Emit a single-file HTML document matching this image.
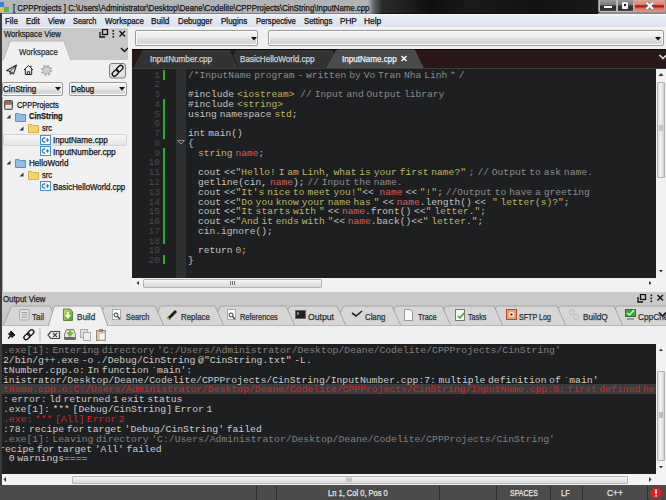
<!DOCTYPE html>
<html><head><meta charset="utf-8"><style>
html,body{margin:0;padding:0;width:666px;height:500px;overflow:hidden;background:#f0f0f0}
.a{position:absolute}
.t{position:absolute;white-space:pre;font-family:"Liberation Sans", sans-serif;transform-origin:0 0;-webkit-text-stroke:0.25px currentColor}
.c{position:absolute;white-space:pre;font-family:"Liberation Mono", monospace}
</style></head><body>
<div class="a" style="left:0px;top:0px;width:666px;height:14px;background:linear-gradient(90deg,#b4b7ba 0px,#b0b3b6 368px,#606264 374px,#2c2c2c 382px,#1c1c1c 410px,#0e0e0e 430px,#1a1a1a 470px,#121212 540px,#1a1a1a 598px,#2a2a2a 666px)"></div>
<div class="a" style="left:0px;top:13px;width:666px;height:1px;background:linear-gradient(90deg,#7c7e80 0px,#7c7e80 370px,#101010 382px,#101010 598px,#8a8a8a 598px)"></div>
<div class="a" style="left:0px;top:2px;width:4px;height:5px;background:#3d7fd6"></div>
<div class="a" style="left:4px;top:7px;width:5px;height:5px;background:#54b84a"></div>
<div class="a" style="left:0px;top:7px;width:4px;height:5px;background:#e8c23c"></div>
<div class="a" style="left:597.5px;top:0px;width:68.5px;height:12.8px;background:#8e8e8e;border-radius:0 0 0 3px"></div>
<div class="a" style="left:598.5px;top:0px;width:18px;height:11.5px;background:linear-gradient(#9a9a9a,#7a7a7a 45%,#3a3a3a 52%,#2e2e2e 80%,#4a4a4a);border:1px solid #b8b8b8;border-top:none;box-sizing:border-box;border-radius:0 0 0 2px"></div>
<div class="a" style="left:604px;top:5.6px;width:7.5px;height:2.4px;background:#f8f8f8;box-shadow:0 0 1px #222"></div>
<div class="a" style="left:617px;top:0px;width:17px;height:11.5px;background:linear-gradient(#9a9a9a,#7a7a7a 45%,#3a3a3a 52%,#2e2e2e 80%,#4a4a4a);border:1px solid #b8b8b8;border-top:none;box-sizing:border-box"></div>
<div class="a" style="left:621.5px;top:2px;width:6.5px;height:6.5px;background:#f4f4f4;border-radius:1px;box-shadow:0 0 1px #222"></div>
<div class="a" style="left:623.7px;top:4.2px;width:2.2px;height:2.2px;background:#111"></div>
<div class="a" style="left:634px;top:0px;width:30.5px;height:11.5px;background:linear-gradient(#e4a090,#d88a7a 40%,#c42a20 48%,#b81818 62%,#d87060 75%,#e09080);border:1px solid #c8a090;border-top:none;box-sizing:border-box;border-radius:0 0 2px 0"></div>
<svg class="a" style="left:644px;top:1px" width="12" height="10"><path d="M2.5 1.5 L9 8 M9 1.5 L2.5 8" stroke="#5a7aa0" stroke-width="3.2"/><path d="M2.5 1.5 L9 8 M9 1.5 L2.5 8" stroke="#fff" stroke-width="2"/></svg>
<div class="a" style="left:0px;top:14px;width:666px;height:14px;background:linear-gradient(#fafbfd 0px,#e6ebf4 2px,#dfe5f0 10px,#dce3ee 12.5px,#f4f6f8 13px)"></div>
<div class="a" style="left:0px;top:28px;width:128px;height:32px;background:#c9c9c9"></div>
<div class="a" style="left:0px;top:60px;width:128px;height:232px;background:#f0f0f0"></div>
<svg class="a" style="left:99px;top:29px" width="28" height="10"><rect x="3.5" y="0.5" width="5" height="5" fill="none" stroke="#111" stroke-width="1.3"/><path d="M1 3 V8 H6" fill="none" stroke="#111" stroke-width="1.3"/><rect x="13.5" y="1" width="1.6" height="1.6" fill="#111"/><rect x="13.5" y="4" width="1.6" height="1.6" fill="#111"/><rect x="13.5" y="7" width="1.6" height="1.6" fill="#111"/><path d="M20.5 2 L26 7.5 M26 2 L20.5 7.5" stroke="#111" stroke-width="1.3"/></svg>
<svg class="a" style="left:0px;top:40px" width="128" height="21"><path d="M3 20.5 L10 1.5 Q11 1 12 1 L64 1 L71 20.5 Z" fill="#f0f0f0" stroke="#b8b8b8" stroke-width="1"/><rect x="3" y="20" width="68" height="1.5" fill="#f0f0f0"/><path d="M121 8 L124.5 11.5 L128 8" fill="none" stroke="#111" stroke-width="1.5"/></svg>
<svg class="a" style="left:0px;top:60px" width="128" height="20"><path d="M6.5 10.5 L16.5 5 L13.5 14 L10 11.5 Z" fill="#e0e0e0" stroke="#333" stroke-width="1.1" stroke-linejoin="round"/><path d="M10 11.5 L16.5 5 M10 11.5 V14.5 L11.8 13" fill="none" stroke="#333" stroke-width="1" stroke-linejoin="round"/><path d="M24 10 L28.5 5.5 L33 10 M25.3 9 V14.5 H31.7 V9 M27.3 14.5 V11.8 H29.7 V14.5 M31 7.5 V5.5" fill="none" stroke="#222" stroke-width="1"/><circle cx="46.5" cy="10.3" r="4.8" fill="none" stroke="#aaaaaa" stroke-width="1.8" stroke-dasharray="1.9 1.87"/><circle cx="46.5" cy="10.3" r="3.4" fill="#dcdcdc" stroke="#aaaaaa" stroke-width="1.1"/><circle cx="46.5" cy="10.3" r="1.3" fill="#f4f4f4" stroke="#b0b0b0" stroke-width="0.8"/><rect x="109.5" y="3.5" width="16" height="14.5" rx="2.5" fill="#e4e4e4" stroke="#7a7a7a" stroke-width="1"/><g transform="rotate(-45 117.5 10.7)"><rect x="110.8" y="8.6" width="7.2" height="4.4" rx="2.2" fill="none" stroke="#111" stroke-width="1.3"/><rect x="117" y="8.6" width="7.2" height="4.4" rx="2.2" fill="none" stroke="#111" stroke-width="1.3"/></g></svg>
<div class="a" style="left:2px;top:81.5px;width:61px;height:14.6px;background:linear-gradient(#f4f4f4,#ebebeb 45%,#dddddd 55%,#d2d2d2);border:1px solid #9a9a9a;border-radius:2px;box-shadow:inset 0 0 0 1px #fafafa;box-sizing:border-box"></div>
<svg class="a" style="left:55px;top:87.3px" width="6" height="4"><path d="M0 0 H6 L3 3.5 Z" fill="#111"/></svg>
<div class="a" style="left:69px;top:81.5px;width:58px;height:14.6px;background:linear-gradient(#f4f4f4,#ebebeb 45%,#dddddd 55%,#d2d2d2);border:1px solid #9a9a9a;border-radius:2px;box-shadow:inset 0 0 0 1px #fafafa;box-sizing:border-box"></div>
<svg class="a" style="left:119px;top:87.3px" width="6" height="4"><path d="M0 0 H6 L3 3.5 Z" fill="#111"/></svg>
<div class="a" style="left:3px;top:133.5px;width:124px;height:12px;background:linear-gradient(#f6f6f6,#e4e4e4);border:1px solid #d4d4d4;border-radius:2px;box-sizing:border-box"></div>
<svg class="a" style="left:4px;top:100px" width="9" height="10"><rect x="0.5" y="0.5" width="8" height="9" rx="1" fill="#8a8a8a" stroke="#555" stroke-width="1"/><rect x="1" y="1" width="7" height="3" fill="#d8552a"/><rect x="1.5" y="5" width="6" height="3.5" fill="#e8e8e8"/></svg>
<svg class="a" style="left:6px;top:114px" width="5" height="5"><path d="M4.5 0.5 V4.5 H0.5 Z" fill="#333"/></svg>
<svg class="a" style="left:15px;top:112px" width="11" height="10"><path d="M0.5 1.5 H4 L5 2.5 H10.5 V9.5 H0.5 Z" fill="#8fbde8" stroke="#5a8fc8" stroke-width="1"/></svg>
<svg class="a" style="left:19px;top:126px" width="5" height="5"><path d="M4.5 0.5 V4.5 H0.5 Z" fill="#333"/></svg>
<svg class="a" style="left:28px;top:123px" width="11" height="10"><path d="M0.5 1.5 H4 L5 2.5 H10.5 V9.5 H0.5 Z" fill="#f4d36a" stroke="#d8b040" stroke-width="1"/></svg>
<svg class="a" style="left:40px;top:134.5px" width="11" height="10"><rect x="0.5" y="0.5" width="10" height="9" fill="#f8fbff" stroke="#4a90d0" stroke-width="1"/><path d="M5.2 3.2 A2 2 0 1 0 5.2 6.8" fill="none" stroke="#2a78c8" stroke-width="1.3"/><path d="M5.8 5 H9.2 M7.5 3.3 V6.7" stroke="#2a78c8" stroke-width="1.2"/></svg>
<svg class="a" style="left:40px;top:146px" width="11" height="10"><rect x="0.5" y="0.5" width="10" height="9" fill="#f8fbff" stroke="#4a90d0" stroke-width="1"/><path d="M5.2 3.2 A2 2 0 1 0 5.2 6.8" fill="none" stroke="#2a78c8" stroke-width="1.3"/><path d="M5.8 5 H9.2 M7.5 3.3 V6.7" stroke="#2a78c8" stroke-width="1.2"/></svg>
<svg class="a" style="left:6px;top:160px" width="5" height="5"><path d="M4.5 0.5 V4.5 H0.5 Z" fill="#333"/></svg>
<svg class="a" style="left:15px;top:158px" width="11" height="10"><path d="M0.5 1.5 H4 L5 2.5 H10.5 V9.5 H0.5 Z" fill="#8fbde8" stroke="#5a8fc8" stroke-width="1"/></svg>
<svg class="a" style="left:19px;top:172px" width="5" height="5"><path d="M4.5 0.5 V4.5 H0.5 Z" fill="#333"/></svg>
<svg class="a" style="left:28px;top:169.5px" width="11" height="10"><path d="M0.5 1.5 H4 L5 2.5 H10.5 V9.5 H0.5 Z" fill="#f4d36a" stroke="#d8b040" stroke-width="1"/></svg>
<svg class="a" style="left:40px;top:181px" width="11" height="10"><rect x="0.5" y="0.5" width="10" height="9" fill="#f8fbff" stroke="#4a90d0" stroke-width="1"/><path d="M5.2 3.2 A2 2 0 1 0 5.2 6.8" fill="none" stroke="#2a78c8" stroke-width="1.3"/><path d="M5.8 5 H9.2 M7.5 3.3 V6.7" stroke="#2a78c8" stroke-width="1.2"/></svg>
<div class="a" style="left:128px;top:28px;width:538px;height:21px;background:#f0f0f0"></div>
<div class="a" style="left:135px;top:30px;width:123px;height:16px;background:linear-gradient(#f4f4f4,#ebebeb 45%,#dddddd 55%,#d2d2d2);border:1px solid #9a9a9a;border-radius:2px;box-shadow:inset 0 0 0 1px #fafafa;box-sizing:border-box"></div>
<svg class="a" style="left:250.5px;top:36.5px" width="6" height="4"><path d="M0 0 H6 L3 3.5 Z" fill="#111"/></svg>
<div class="a" style="left:268px;top:30px;width:395.5px;height:16px;background:linear-gradient(#f4f4f4,#ebebeb 45%,#dddddd 55%,#d2d2d2);border:1px solid #9a9a9a;border-radius:2px;box-shadow:inset 0 0 0 1px #fafafa;box-sizing:border-box"></div>
<svg class="a" style="left:655px;top:36.5px" width="6" height="4"><path d="M0 0 H6 L3 3.5 Z" fill="#111"/></svg>
<div class="a" style="left:132px;top:49px;width:534px;height:20px;background:#2a1818"></div>
<svg class="a" style="left:132px;top:49px" width="534" height="20"><rect x="0" y="0" width="534" height="1" fill="#080808"/><path d="M95 19 L104 1 L200 1 L209 19 Z" fill="#333333"/><path d="M1.5 19 L10.5 1 L98 1 L106.5 19 Z" fill="#333333"/><path d="M98 1 L106.5 19" stroke="#1e1e1e" stroke-width="1"/><path d="M195 19 L205 1 L282.5 1 L291 19 Z" fill="#4a4a4a" stroke="#5a5a5a" stroke-width="0.8"/><path d="M527.5 6 L531 9.5 L534.5 6" fill="none" stroke="#e8e8e8" stroke-width="1.5"/><path d="M269.5 7 L274.5 12 M274.5 7 L269.5 12" stroke="#f4f4f4" stroke-width="1.5"/><rect x="0" y="19" width="534" height="1" fill="#3c3c3c"/></svg>
<div class="a" style="left:132px;top:69px;width:524px;height:209px;background:#1e1f21"></div>
<div class="a" style="left:131px;top:69px;width:1px;height:209px;background:#101010"></div>
<div class="a" style="left:176px;top:69px;width:10px;height:209px;background:#2e2f31"></div>
<div class="a" style="left:163px;top:70px;width:2px;height:9.5px;background:#22b022"></div>
<div class="a" style="left:163px;top:99px;width:2px;height:39.5px;background:#22b022"></div>
<div class="a" style="left:163px;top:148px;width:2px;height:96px;background:#22b022"></div>
<div class="a" style="left:163px;top:254.5px;width:2px;height:9.5px;background:#22b022"></div>
<div class="c" style="left:154.24px;top:70.63px;font-size:9.6px;line-height:9.6px;word-spacing:-2.86px"><span style="color:#4a4a4a">1</span></div>
<div class="c" style="left:154.24px;top:80.39px;font-size:9.6px;line-height:9.6px;word-spacing:-2.86px"><span style="color:#4a4a4a">2</span></div>
<div class="c" style="left:154.24px;top:90.15px;font-size:9.6px;line-height:9.6px;word-spacing:-2.86px"><span style="color:#4a4a4a">3</span></div>
<div class="c" style="left:154.24px;top:99.91px;font-size:9.6px;line-height:9.6px;word-spacing:-2.86px"><span style="color:#4a4a4a">4</span></div>
<div class="c" style="left:154.24px;top:109.67px;font-size:9.6px;line-height:9.6px;word-spacing:-2.86px"><span style="color:#4a4a4a">5</span></div>
<div class="c" style="left:154.24px;top:119.43px;font-size:9.6px;line-height:9.6px;word-spacing:-2.86px"><span style="color:#4a4a4a">6</span></div>
<div class="c" style="left:154.24px;top:129.19px;font-size:9.6px;line-height:9.6px;word-spacing:-2.86px"><span style="color:#4a4a4a">7</span></div>
<div class="c" style="left:154.24px;top:138.95px;font-size:9.6px;line-height:9.6px;word-spacing:-2.86px"><span style="color:#4a4a4a">8</span></div>
<div class="c" style="left:154.24px;top:148.71px;font-size:9.6px;line-height:9.6px;word-spacing:-2.86px"><span style="color:#4a4a4a">9</span></div>
<div class="c" style="left:148.48px;top:158.47px;font-size:9.6px;line-height:9.6px;word-spacing:-2.86px"><span style="color:#4a4a4a">10</span></div>
<div class="c" style="left:148.48px;top:168.23px;font-size:9.6px;line-height:9.6px;word-spacing:-2.86px"><span style="color:#4a4a4a">11</span></div>
<div class="c" style="left:148.48px;top:177.99px;font-size:9.6px;line-height:9.6px;word-spacing:-2.86px"><span style="color:#4a4a4a">12</span></div>
<div class="c" style="left:148.48px;top:187.75px;font-size:9.6px;line-height:9.6px;word-spacing:-2.86px"><span style="color:#4a4a4a">13</span></div>
<div class="c" style="left:148.48px;top:197.51px;font-size:9.6px;line-height:9.6px;word-spacing:-2.86px"><span style="color:#4a4a4a">14</span></div>
<div class="c" style="left:148.48px;top:207.27px;font-size:9.6px;line-height:9.6px;word-spacing:-2.86px"><span style="color:#4a4a4a">15</span></div>
<div class="c" style="left:148.48px;top:217.03px;font-size:9.6px;line-height:9.6px;word-spacing:-2.86px"><span style="color:#4a4a4a">16</span></div>
<div class="c" style="left:148.48px;top:226.79px;font-size:9.6px;line-height:9.6px;word-spacing:-2.86px"><span style="color:#4a4a4a">17</span></div>
<div class="c" style="left:148.48px;top:236.55px;font-size:9.6px;line-height:9.6px;word-spacing:-2.86px"><span style="color:#4a4a4a">18</span></div>
<div class="c" style="left:148.48px;top:246.31px;font-size:9.6px;line-height:9.6px;word-spacing:-2.86px"><span style="color:#4a4a4a">19</span></div>
<div class="c" style="left:148.48px;top:256.07px;font-size:9.6px;line-height:9.6px;word-spacing:-2.86px"><span style="color:#4a4a4a">20</span></div>
<svg class="a" style="left:177px;top:140.12px" width="8" height="5"><path d="M0.5 0.5 H7.5 L4 4 Z" fill="none" stroke="#8a8a8a" stroke-width="1"/></svg>
<div class="c" style="left:188.00px;top:70.63px;font-size:9.6px;line-height:9.6px;word-spacing:-2.86px"><span style="color:#8c8c8c">/*InputName program - written by Vo Tran Nha Linh * /</span></div>
<div class="c" style="left:188.00px;top:90.15px;font-size:9.6px;line-height:9.6px;word-spacing:-2.86px"><span style="color:#c4c4c4">#include </span><span style="color:#b8b866">&lt;iostream&gt;</span><span style="color:#8c8c8c">  // Input and Output library</span></div>
<div class="c" style="left:188.00px;top:99.91px;font-size:9.6px;line-height:9.6px;word-spacing:-2.86px"><span style="color:#c4c4c4">#include </span><span style="color:#b8b866">&lt;string&gt;</span></div>
<div class="c" style="left:188.00px;top:109.67px;font-size:9.6px;line-height:9.6px;word-spacing:-2.86px"><span style="color:#c4c4c4">using namespace </span><span style="color:#ccb068">std</span><span style="color:#c4c4c4">;</span></div>
<div class="c" style="left:188.00px;top:129.19px;font-size:9.6px;line-height:9.6px;word-spacing:-2.86px"><span style="color:#c4c4c4">int main()</span></div>
<div class="c" style="left:188.00px;top:138.95px;font-size:9.6px;line-height:9.6px;word-spacing:-2.86px"><span style="color:#c4c4c4">{</span></div>
<div class="c" style="left:198.00px;top:148.71px;font-size:9.6px;line-height:9.6px;word-spacing:-2.86px"><span style="color:#ccb068">string </span><span style="color:#d06060">name</span><span style="color:#c4c4c4">;</span></div>
<div class="c" style="left:198.00px;top:168.23px;font-size:9.6px;line-height:9.6px;word-spacing:-2.86px"><span style="color:#c4c4c4">cout &lt;&lt;</span><span style="color:#b8b866">&quot;Hello! I am Linh, what is your first name?&quot;</span><span style="color:#8c8c8c"> ; // Output to ask name.</span></div>
<div class="c" style="left:198.00px;top:177.99px;font-size:9.6px;line-height:9.6px;word-spacing:-2.86px"><span style="color:#c4c4c4">getline(cin, </span><span style="color:#d06060">name</span><span style="color:#c4c4c4">); </span><span style="color:#8c8c8c">// Input the name.</span></div>
<div class="c" style="left:198.00px;top:187.75px;font-size:9.6px;line-height:9.6px;word-spacing:-2.86px"><span style="color:#c4c4c4">cout &lt;&lt;</span><span style="color:#b8b866">&quot;It&#x27;s nice to meet you!&quot;</span><span style="color:#c4c4c4">&lt;&lt;  </span><span style="color:#d06060">name</span><span style="color:#c4c4c4"> &lt;&lt; </span><span style="color:#b8b866">&quot;!&quot;</span><span style="color:#c4c4c4">; </span><span style="color:#8c8c8c">//Output to have a greeting</span></div>
<div class="c" style="left:198.00px;top:197.51px;font-size:9.6px;line-height:9.6px;word-spacing:-2.86px"><span style="color:#c4c4c4">cout &lt;&lt;</span><span style="color:#b8b866">&quot;Do you know your name has &quot;</span><span style="color:#c4c4c4"> &lt;&lt; </span><span style="color:#d06060">name</span><span style="color:#c4c4c4">.length() &lt;&lt;  </span><span style="color:#b8b866">&quot; letter(s)?&quot;</span><span style="color:#c4c4c4">;</span></div>
<div class="c" style="left:198.00px;top:207.27px;font-size:9.6px;line-height:9.6px;word-spacing:-2.86px"><span style="color:#c4c4c4">cout &lt;&lt;</span><span style="color:#b8b866">&quot;It starts with &quot;</span><span style="color:#c4c4c4"> &lt;&lt; </span><span style="color:#d06060">name</span><span style="color:#c4c4c4">.front() &lt;&lt;</span><span style="color:#b8b866">&quot; letter.&quot;</span><span style="color:#c4c4c4">;</span></div>
<div class="c" style="left:198.00px;top:217.03px;font-size:9.6px;line-height:9.6px;word-spacing:-2.86px"><span style="color:#c4c4c4">cout &lt;&lt;</span><span style="color:#b8b866">&quot;And it ends with &quot;</span><span style="color:#c4c4c4">&lt;&lt; </span><span style="color:#d06060">name</span><span style="color:#c4c4c4">.back()&lt;&lt;</span><span style="color:#b8b866">&quot; letter.&quot;</span><span style="color:#c4c4c4">;</span></div>
<div class="c" style="left:198.00px;top:226.79px;font-size:9.6px;line-height:9.6px;word-spacing:-2.86px"><span style="color:#c4c4c4">cin.ignore();</span></div>
<div class="c" style="left:198.00px;top:246.31px;font-size:9.6px;line-height:9.6px;word-spacing:-2.86px"><span style="color:#c4c4c4">return </span><span style="color:#ccb068">0</span><span style="color:#c4c4c4">;</span></div>
<div class="c" style="left:188.00px;top:256.07px;font-size:9.6px;line-height:9.6px;word-spacing:-2.86px"><span style="color:#c4c4c4">}</span></div>
<div class="a" style="left:656px;top:69px;width:10px;height:209px;background:#f2f2f2"></div>
<div class="a" style="left:657px;top:82px;width:8px;height:96px;background:linear-gradient(90deg,#dcdcdc,#f4f4f4 40%,#d0d0d0);border:1px solid #b0b0b0;border-radius:1px;box-sizing:border-box"></div>
<svg class="a" style="left:656px;top:68px" width="10" height="210"><path d="M2.5 8 L5 5 L7.5 8 Z" fill="#333"/><path d="M3 202 L5 204.5 L7 202 Z" fill="#333"/><path d="M3 58 H7 M3 60 H7 M3 62 H7" stroke="#888" stroke-width="0.8"/></svg>
<div class="a" style="left:132px;top:278px;width:534px;height:10px;background:#f2f2f2"></div>
<svg class="a" style="left:132px;top:278px" width="534" height="10"><path d="M7 3 L4.5 5 L7 7 Z" fill="#333"/><path d="M517 3 L519.5 5 L517 7 Z" fill="#333"/></svg>
<div class="a" style="left:143px;top:278.5px;width:179px;height:9px;background:linear-gradient(#f4f4f4,#dadada);border:1px solid #b4b4b4;border-radius:1px;box-sizing:border-box"></div>
<svg class="a" style="left:229px;top:280px" width="8" height="6"><path d="M1.5 1 V5 M3.5 1 V5 M5.5 1 V5" stroke="#666" stroke-width="0.9"/></svg>
<div class="a" style="left:128px;top:288px;width:538px;height:4px;background:#f0f0f0"></div>
<div class="a" style="left:128px;top:49px;width:4px;height:243px;background:#f0f0f0"></div>
<div class="a" style="left:0px;top:292px;width:666px;height:33px;background:#c9c9c9"></div>
<svg class="a" style="left:637px;top:294px" width="29" height="9"><rect x="3.5" y="0.5" width="5" height="5" fill="none" stroke="#111" stroke-width="1.3"/><path d="M1 3 V8 H6" fill="none" stroke="#111" stroke-width="1.3"/><rect x="13.5" y="0.5" width="1.6" height="1.6" fill="#111"/><rect x="13.5" y="3.5" width="1.6" height="1.6" fill="#111"/><rect x="13.5" y="6.5" width="1.6" height="1.6" fill="#111"/><path d="M20.5 1 L26 6.5 M26 1 L20.5 6.5" stroke="#111" stroke-width="1.3"/></svg>
<svg class="a" style="left:0px;top:304.8px" width="666" height="22"><path d="M608 21 L616 2 Q617 1 619 1 L700 1 L709 21 Z" fill="#d6d6d6" stroke="#a4a4a4" stroke-width="1"/><path d="M551 21 L559 2 Q560 1 562 1 L614 1 L623 21 Z" fill="#d6d6d6" stroke="#a4a4a4" stroke-width="1"/><path d="M488 21 L496 2 Q497 1 499 1 L557 1 L566 21 Z" fill="#d6d6d6" stroke="#a4a4a4" stroke-width="1"/><path d="M437 21 L445 2 Q446 1 448 1 L494 1 L503 21 Z" fill="#d6d6d6" stroke="#a4a4a4" stroke-width="1"/><path d="M387 21 L395 2 Q396 1 398 1 L442 1 L451 21 Z" fill="#d6d6d6" stroke="#a4a4a4" stroke-width="1"/><path d="M335 21 L343 2 Q344 1 346 1 L392 1 L401 21 Z" fill="#d6d6d6" stroke="#a4a4a4" stroke-width="1"/><path d="M281 21 L289 2 Q290 1 292 1 L337 1 L346 21 Z" fill="#d6d6d6" stroke="#a4a4a4" stroke-width="1"/><path d="M212 21 L220 2 Q221 1 223 1 L286 1 L295 21 Z" fill="#d6d6d6" stroke="#a4a4a4" stroke-width="1"/><path d="M152 21 L160 2 Q161 1 163 1 L215 1 L224 21 Z" fill="#d6d6d6" stroke="#a4a4a4" stroke-width="1"/><path d="M96 21 L104 2 Q105 1 107 1 L155 1 L164 21 Z" fill="#d6d6d6" stroke="#a4a4a4" stroke-width="1"/><path d="M3 21 L11 2 Q12 1 14 1 L50 1 L59 21 Z" fill="#d6d6d6" stroke="#a4a4a4" stroke-width="1"/><rect x="0" y="20.5" width="666" height="1" fill="#b4b4b4"/><path d="M48 22 L54 2 Q55 1 57 1 L101 1 L108 22" fill="#f0f0f0" stroke="#a4a4a4" stroke-width="1"/><path d="M659 7.5 L662.5 11 L666 7.5" fill="none" stroke="#111" stroke-width="1.6"/></svg>
<svg class="a" style="left:0px;top:308px" width="666" height="14"><rect x="19.5" y="1.5" width="9.5" height="10.5" rx="1.5" fill="#e2e2e2" stroke="#a8a8a8"/><path d="M21.5 4.5 H27 M21.5 6.8 H27 M21.5 9.1 H27" stroke="#9a9a9a" stroke-width="1"/><defs><linearGradient id="gb" x1="0" y1="0" x2="1" y2="1"><stop offset="0" stop-color="#d8e070"/><stop offset="1" stop-color="#4a9a2a"/></linearGradient></defs><path d="M63.5 1 H70 L72.5 3.5 V12.5 H63.5 Z" fill="url(#gb)" stroke="#5a8a2a"/><path d="M68 4 V9 M65.8 7 L68 9.5 L70.2 7" stroke="#fff" stroke-width="1.6" fill="none"/><rect x="112.5" y="1.5" width="8" height="10" fill="#fff" stroke="#aaa"/><circle cx="116" cy="7" r="2" fill="none" stroke="#333"/><path d="M117.5 8.5 L120 11" stroke="#333" stroke-width="1.3"/><path d="M168 11 L176 3" stroke="#222" stroke-width="3"/><path d="M167 12 L169 10" stroke="#e8c040" stroke-width="2"/><rect x="227.5" y="1.5" width="8" height="10" fill="#fff" stroke="#aaa"/><circle cx="231" cy="7" r="2" fill="none" stroke="#333"/><path d="M232.5 8.5 L235 11" stroke="#333" stroke-width="1.3"/><rect x="295.5" y="2.5" width="10" height="8" fill="#222" stroke="#666"/><path d="M297 4.5 L299 5.5 L297 6.5" stroke="#ddd" fill="none" stroke-width="0.8"/><path d="M352 5 L356 8 L362 3" stroke="#222" stroke-width="1.6" fill="none"/><path d="M404.5 1.5 H410 L412.5 4 V12.5 H404.5 Z" fill="#fafafa" stroke="#999"/><rect x="455.5" y="1.5" width="9" height="11" fill="#f4f4f4" stroke="#777"/><path d="M458 8 L460 10 L464 5" stroke="#3a3" stroke-width="1.5" fill="none"/><rect x="506.5" y="1.5" width="10" height="10" fill="#f0a070" stroke="#c04a20"/><circle cx="511.5" cy="6.5" r="2.5" fill="#fff"/><circle cx="511.5" cy="6.5" r="1.2" fill="#333"/><circle cx="572" cy="4" r="2.5" fill="none" stroke="#bbb"/><circle cx="576" cy="9" r="2.5" fill="none" stroke="#bbb"/><rect x="625.5" y="1.5" width="10" height="7" fill="#3a3" stroke="#2a7a2a"/><path d="M627 5 L629.5 7 L634 2" stroke="#fff" stroke-width="1.2" fill="none"/><rect x="627" y="10" width="7" height="2" fill="#999"/></svg>
<div class="a" style="left:0px;top:326px;width:666px;height:18px;background:#f0f0f0"></div>
<svg class="a" style="left:0px;top:326px" width="60" height="18"><path d="M8 12.5 L10.5 10" stroke="#111" stroke-width="1.3"/><path d="M9.5 7 L13 10.5 L12 11.5 L8.5 8 Z M11 5 L15 9 L13.5 10 L10 6.5 Z" fill="#111" stroke="#111" stroke-width="1"/><g transform="rotate(-45 28.8 8.8)"><rect x="22.8" y="6.6" width="7" height="4.4" rx="2.2" fill="none" stroke="#111" stroke-width="1.3"/><rect x="28" y="6.6" width="7" height="4.4" rx="2.2" fill="none" stroke="#111" stroke-width="1.3"/></g><rect x="39.5" y="2" width="1" height="14" fill="#b8b8b8"/></svg>
<svg class="a" style="left:44px;top:327px" width="70" height="16"><path d="M4 8 L7 4.5 H15.5 V11.5 H7 Z" fill="none" stroke="#444" stroke-width="1.2"/><path d="M9 6 L13 10 M13 6 L9 10" stroke="#444" stroke-width="1.2"/><path d="M20.5 7.5 L22.5 2.5 H29.5 L31.5 7.5 V12.5 H20.5 Z" fill="#e4e4e4" stroke="#777"/><rect x="21" y="10" width="10" height="2.5" fill="#666"/><path d="M26 2 V7.5 M23.5 5.5 L26 8.5 L28.5 5.5" stroke="#7ab83a" stroke-width="2.2" fill="none"/><rect x="36.5" y="2.5" width="7" height="8" fill="#ddd" stroke="#aaa"/><rect x="39.5" y="5.5" width="7" height="8" fill="#eee" stroke="#aaa"/><rect x="52.5" y="3.5" width="9" height="10" fill="#d8c8a8" stroke="#a08860"/><rect x="55" y="6" width="6" height="7" fill="#f4f4f4" stroke="#bbb"/><rect x="55" y="2" width="4" height="3" fill="#888"/></svg>
<div class="a" style="left:0px;top:344px;width:666px;height:130px;background:#1e1f21"></div>
<div class="a" style="left:0px;top:383.5px;width:656px;height:10px;background:#3a3b3d"></div>
<div class="c" style="left:3.00px;top:345.95px;font-size:9.767px;line-height:9.767px;word-spacing:-3.25px"><span style="color:#808080">.exe[1]: Entering directory &#x27;C:/Users/Administrator/Desktop/Deane/Codelite/CPPProjects/CinString&#x27;</span></div>
<div class="c" style="left:3.00px;top:355.81px;font-size:9.767px;line-height:9.767px;word-spacing:-3.25px"><span style="color:#cccccc">2/bin/g++.exe -o ./Debug/CinString @&quot;CinString.txt&quot; -L.</span></div>
<div class="c" style="left:3.00px;top:365.67px;font-size:9.767px;line-height:9.767px;word-spacing:-3.25px"><span style="color:#cccccc">tNumber.cpp.o: In function `main&#x27;:</span></div>
<div class="c" style="left:3.00px;top:375.53px;font-size:9.767px;line-height:9.767px;word-spacing:-3.25px"><span style="color:#cccccc">inistrator/Desktop/Deane/Codelite/CPPProjects/CinString/InputNumber.cpp:7: multiple definition of `main&#x27;</span></div>
<div class="c" style="left:3.00px;top:385.39px;font-size:9.767px;line-height:9.767px;word-spacing:-3.25px"><span style="color:#e01c1c">tName.cpp.o:C:/Users/Administrator/Desktop/Deane/Codelite/CPPProjects/CinString/InputName.cpp:8: first defined here</span></div>
<div class="c" style="left:3.00px;top:395.25px;font-size:9.767px;line-height:9.767px;word-spacing:-3.25px"><span style="color:#cccccc">: error: ld returned 1 exit status</span></div>
<div class="c" style="left:3.00px;top:405.11px;font-size:9.767px;line-height:9.767px;word-spacing:-3.25px"><span style="color:#cccccc">.exe[1]: *** [Debug/CinString] Error 1</span></div>
<div class="c" style="left:3.00px;top:414.97px;font-size:9.767px;line-height:9.767px;word-spacing:-3.25px"><span style="color:#e01c1c">.exe: *** [All] Error 2</span></div>
<div class="c" style="left:3.00px;top:424.83px;font-size:9.767px;line-height:9.767px;word-spacing:-3.25px"><span style="color:#cccccc">:78: recipe for target &#x27;Debug/CinString&#x27; failed</span></div>
<div class="c" style="left:3.00px;top:434.69px;font-size:9.767px;line-height:9.767px;word-spacing:-3.25px"><span style="color:#808080">.exe[1]: Leaving directory &#x27;C:/Users/Administrator/Desktop/Deane/Codelite/CPPProjects/CinString&#x27;</span></div>
<div class="c" style="left:-0.90px;top:444.55px;font-size:9.767px;line-height:9.767px;word-spacing:-3.25px"><span style="color:#cccccc">recipe for target &#x27;All&#x27; failed</span></div>
<div class="c" style="left:8.76px;top:454.41px;font-size:9.767px;line-height:9.767px;word-spacing:-3.25px"><span style="color:#cccccc">0 warnings====</span></div>
<div class="a" style="left:656px;top:344px;width:10px;height:130px;background:#f2f2f2"></div>
<div class="a" style="left:657px;top:370.5px;width:8px;height:90px;background:linear-gradient(90deg,#dcdcdc,#f4f4f4 40%,#d0d0d0);border:1px solid #b0b0b0;border-radius:1px;box-sizing:border-box"></div>
<svg class="a" style="left:656px;top:344px" width="10" height="130"><path d="M3 7 L5 4.5 L7 7 Z" fill="#333"/><path d="M3 122 L5 124.5 L7 122 Z" fill="#333"/><path d="M3 69 H7 M3 71 H7 M3 73 H7" stroke="#777" stroke-width="0.8"/></svg>
<div class="a" style="left:0px;top:474px;width:666px;height:11px;background:#f4f4f4"></div>
<div class="a" style="left:72px;top:475.5px;width:556px;height:8.5px;background:linear-gradient(#f4f4f4,#dadada);border:1px solid #b4b4b4;border-radius:1px;box-sizing:border-box"></div>
<svg class="a" style="left:0px;top:474px" width="666" height="11"><path d="M6 3 L3.5 5.5 L6 8 Z" fill="#333"/><path d="M649 3 L651.5 5.5 L649 8 Z" fill="#333"/><path d="M347 3.5 V7.5 M349 3.5 V7.5 M351 3.5 V7.5" stroke="#888" stroke-width="0.8"/></svg>
<div class="a" style="left:0px;top:485px;width:666px;height:15px;background:#4b4b4b"></div>
<div class="a" style="left:256px;top:486px;width:1px;height:14px;background:#2e2e2e"></div>
<div class="a" style="left:276px;top:486px;width:1px;height:14px;background:#2e2e2e"></div>
<div class="a" style="left:439px;top:486px;width:1px;height:14px;background:#2e2e2e"></div>
<div class="a" style="left:496px;top:486px;width:1px;height:14px;background:#2e2e2e"></div>
<div class="a" style="left:550px;top:486px;width:1px;height:14px;background:#2e2e2e"></div>
<div class="a" style="left:582px;top:486px;width:1px;height:14px;background:#2e2e2e"></div>
<div class="a" style="left:647px;top:486px;width:1px;height:14px;background:#2e2e2e"></div>
<svg class="a" style="left:650px;top:487px" width="12" height="12"><circle cx="6" cy="6" r="5.5" fill="#e02020"/><rect x="5.2" y="2.5" width="1.6" height="4.5" fill="#fff"/><rect x="5.2" y="8" width="1.6" height="1.6" fill="#fff"/></svg>
<div class="a" style="left:0px;top:13px;width:1.5px;height:472px;background:#3a3a3a"></div>
<div class="a" style="left:1.5px;top:97px;width:1px;height:195px;background:#a8a8a8"></div>
<div class="t" style="left:13.00px;top:2.58px;font-size:9.5px;line-height:9.5px;color:#101010;font-weight:normal;transform:scaleX(0.8222);">[ CPPProjects ] C:\Users\Administrator\Desktop\Deane\Codelite\CPPProjects\CinString\InputName.cpp</div>
<div class="t" style="left:4.60px;top:16.86px;font-size:8.3px;line-height:8.3px;color:#101010;font-weight:normal;transform:scaleX(0.9574);">File</div>
<div class="t" style="left:25.60px;top:16.86px;font-size:8.3px;line-height:8.3px;color:#101010;font-weight:normal;transform:scaleX(0.9653);">Edit</div>
<div class="t" style="left:47.60px;top:16.86px;font-size:8.3px;line-height:8.3px;color:#101010;font-weight:normal;transform:scaleX(0.9421);">View</div>
<div class="t" style="left:72.60px;top:16.86px;font-size:8.3px;line-height:8.3px;color:#101010;font-weight:normal;transform:scaleX(0.8863);">Search</div>
<div class="t" style="left:104.60px;top:16.86px;font-size:8.3px;line-height:8.3px;color:#101010;font-weight:normal;transform:scaleX(0.9384);">Workspace</div>
<div class="t" style="left:151.10px;top:16.86px;font-size:8.3px;line-height:8.3px;color:#101010;font-weight:normal;transform:scaleX(0.9919);">Build</div>
<div class="t" style="left:178.10px;top:16.86px;font-size:8.3px;line-height:8.3px;color:#101010;font-weight:normal;transform:scaleX(0.9413);">Debugger</div>
<div class="t" style="left:221.10px;top:16.86px;font-size:8.3px;line-height:8.3px;color:#101010;font-weight:normal;transform:scaleX(0.9665);">Plugins</div>
<div class="t" style="left:255.60px;top:16.86px;font-size:8.3px;line-height:8.3px;color:#101010;font-weight:normal;transform:scaleX(0.9182);">Perspective</div>
<div class="t" style="left:303.60px;top:16.86px;font-size:8.3px;line-height:8.3px;color:#101010;font-weight:normal;transform:scaleX(0.9440);">Settings</div>
<div class="t" style="left:340.10px;top:16.86px;font-size:8.3px;line-height:8.3px;color:#101010;font-weight:normal;transform:scaleX(0.9848);">PHP</div>
<div class="t" style="left:364.10px;top:16.86px;font-size:8.3px;line-height:8.3px;color:#101010;font-weight:normal;transform:scaleX(1.0138);">Help</div>
<div class="t" style="left:3.60px;top:29.62px;font-size:9px;line-height:9px;color:#202020;font-weight:normal;transform:scaleX(0.8516);">Workspace View</div>
<div class="t" style="left:18.60px;top:47.62px;font-size:9px;line-height:9px;color:#303030;font-weight:normal;transform:scaleX(0.8651);">Workspace</div>
<div class="t" style="left:3.00px;top:85.12px;font-size:9px;line-height:9px;color:#101010;font-weight:normal;transform:scaleX(0.8996);">CinString</div>
<div class="t" style="left:71.00px;top:85.12px;font-size:9px;line-height:9px;color:#101010;font-weight:normal;transform:scaleX(0.8748);">Debug</div>
<div class="t" style="left:17.00px;top:101.42px;font-size:9px;line-height:9px;color:#101010;font-weight:normal;transform:scaleX(0.8174);">CPPProjects</div>
<div class="t" style="left:29.00px;top:112.42px;font-size:9px;line-height:9px;color:#101010;font-weight:bold;transform:scaleX(0.8297);">CinString</div>
<div class="t" style="left:41.60px;top:124.22px;font-size:9px;line-height:9px;color:#101010;font-weight:normal;transform:scaleX(0.8419);">src</div>
<div class="t" style="left:53.40px;top:136.22px;font-size:9px;line-height:9px;color:#101010;font-weight:normal;transform:scaleX(0.8978);">InputName.cpp</div>
<div class="t" style="left:53.40px;top:148.02px;font-size:9px;line-height:9px;color:#101010;font-weight:normal;transform:scaleX(0.9148);">InputNumber.cpp</div>
<div class="t" style="left:29.00px;top:159.42px;font-size:9px;line-height:9px;color:#101010;font-weight:normal;transform:scaleX(0.8985);">HelloWorld</div>
<div class="t" style="left:41.60px;top:171.22px;font-size:9px;line-height:9px;color:#101010;font-weight:normal;transform:scaleX(0.8419);">src</div>
<div class="t" style="left:53.40px;top:183.02px;font-size:9px;line-height:9px;color:#101010;font-weight:normal;transform:scaleX(0.8713);">BasicHelloWorld.cpp</div>
<div class="t" style="left:150.30px;top:55.12px;font-size:9px;line-height:9px;color:#d4d4d4;font-weight:normal;transform:scaleX(0.9060);">InputNumber.cpp</div>
<div class="t" style="left:239.60px;top:55.12px;font-size:9px;line-height:9px;color:#d4d4d4;font-weight:normal;transform:scaleX(0.9002);">BasicHelloWorld.cpp</div>
<div class="t" style="left:341.60px;top:55.12px;font-size:9px;line-height:9px;color:#f4f4f4;font-weight:normal;transform:scaleX(0.8978);">InputName.cpp</div>
<div class="t" style="left:3.40px;top:294.62px;font-size:8.6px;line-height:8.6px;color:#202020;font-weight:normal;transform:scaleX(0.9109);">Output View</div>
<div class="t" style="left:32.30px;top:312.52px;font-size:8.8px;line-height:8.8px;color:#303030;font-weight:normal;transform:scaleX(0.9091);">Tail</div>
<div class="t" style="left:76.60px;top:312.52px;font-size:8.8px;line-height:8.8px;color:#303030;font-weight:normal;transform:scaleX(0.9304);">Build</div>
<div class="t" style="left:125.90px;top:312.52px;font-size:8.8px;line-height:8.8px;color:#303030;font-weight:normal;transform:scaleX(0.8324);">Search</div>
<div class="t" style="left:180.60px;top:312.52px;font-size:8.8px;line-height:8.8px;color:#303030;font-weight:normal;transform:scaleX(0.8923);">Replace</div>
<div class="t" style="left:239.60px;top:312.52px;font-size:8.8px;line-height:8.8px;color:#303030;font-weight:normal;transform:scaleX(0.8403);">References</div>
<div class="t" style="left:307.90px;top:312.52px;font-size:8.8px;line-height:8.8px;color:#303030;font-weight:normal;transform:scaleX(0.9846);">Output</div>
<div class="t" style="left:364.80px;top:312.52px;font-size:8.8px;line-height:8.8px;color:#303030;font-weight:normal;transform:scaleX(0.8876);">Clang</div>
<div class="t" style="left:417.60px;top:312.52px;font-size:8.8px;line-height:8.8px;color:#303030;font-weight:normal;transform:scaleX(0.8439);">Trace</div>
<div class="t" style="left:468.10px;top:312.52px;font-size:8.8px;line-height:8.8px;color:#303030;font-weight:normal;transform:scaleX(0.8138);">Tasks</div>
<div class="t" style="left:518.60px;top:312.52px;font-size:8.8px;line-height:8.8px;color:#303030;font-weight:normal;transform:scaleX(0.8105);">SFTP Log</div>
<div class="t" style="left:582.60px;top:312.52px;font-size:8.8px;line-height:8.8px;color:#303030;font-weight:normal;transform:scaleX(0.9393);">BuildQ</div>
<div class="t" style="left:637.60px;top:312.52px;font-size:8.8px;line-height:8.8px;color:#303030;font-weight:normal;transform:scaleX(0.9447);">CppCheck</div>
<div class="t" style="left:327.60px;top:488.86px;font-size:8.5px;line-height:8.5px;color:#e8e8e8;font-weight:normal;transform:scaleX(0.8850);">Ln 1, Col 0, Pos 0</div>
<div class="t" style="left:509.60px;top:488.86px;font-size:8.5px;line-height:8.5px;color:#e8e8e8;font-weight:normal;transform:scaleX(0.8212);">SPACES</div>
<div class="t" style="left:560.60px;top:488.86px;font-size:8.5px;line-height:8.5px;color:#e8e8e8;font-weight:normal;transform:scaleX(0.8871);">LF</div>
<div class="t" style="left:606.60px;top:488.86px;font-size:8.5px;line-height:8.5px;color:#e8e8e8;font-weight:normal;transform:scaleX(0.9834);">C++</div>
</body></html>
